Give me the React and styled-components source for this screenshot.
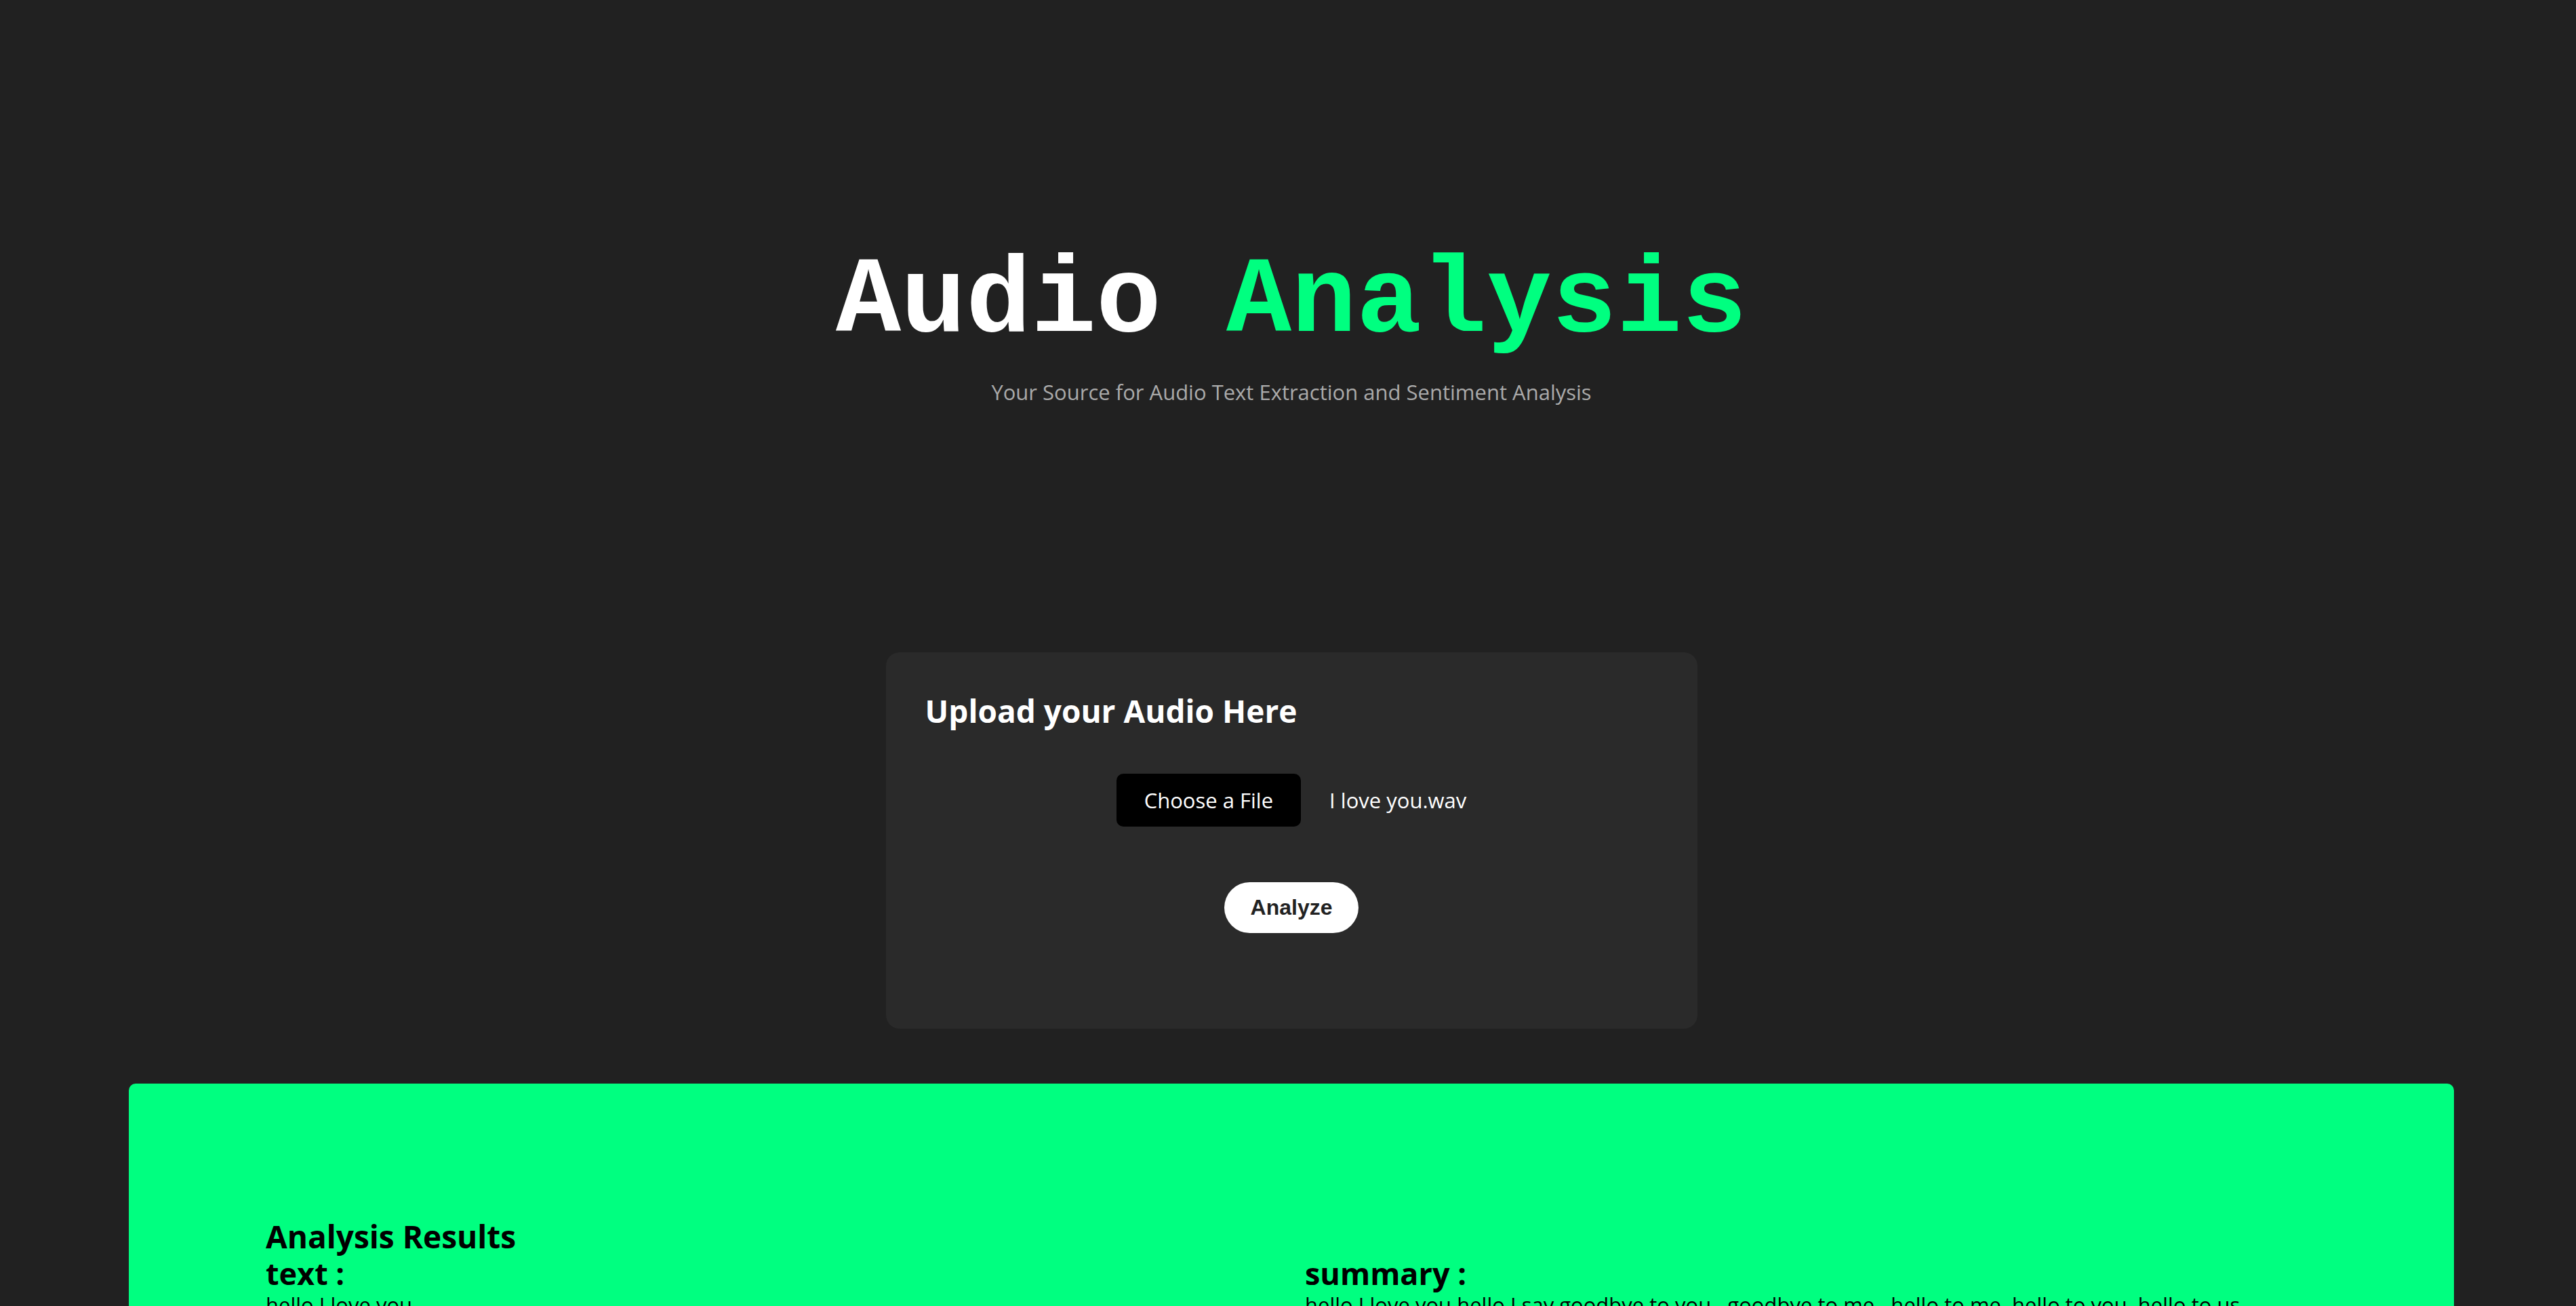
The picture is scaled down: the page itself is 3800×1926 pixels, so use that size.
import styled, { createGlobalStyle } from "styled-components";

const GlobalStyle = createGlobalStyle`
  * {
    box-sizing: border-box;
  }

  body {
    margin: 0;
    background: #212121;
    color: #fff;
    font-family: "Open Sans", "Noto Sans", sans-serif;
  }
`;

const Page = styled.main`
  display: flex;
  flex-direction: column;
  align-items: center;
  padding-left: 10px;
  padding-top: 356px;
`;

const Hero = styled.header`
  text-align: center;
  margin-bottom: 363px;

  .title {
    margin: 0;
    font-family: "Liberation Mono", monospace;
    font-size: 160px;
    line-height: 180px;
    font-weight: 700;
    color: #fff;
  }

  .title span {
    color: #00ff80;
  }

  .subtitle {
    margin: 21px 0 0;
    font-size: 31px;
    font-weight: 400;
    line-height: 42px;
    color: #aaaaaa;
  }
`;

const UploadCard = styled.section`
  width: 1197px;
  padding: 58px 58px 141px;
  background: #2a2a2a;
  border-radius: 20px;

  .heading {
    margin: 0 0 65px;
    font-size: 46px;
    line-height: 56px;
    font-weight: 700;
  }
`;

const FileRow = styled.div`
  display: flex;
  align-items: center;
  justify-content: center;
  gap: 42px;
  margin-bottom: 82px;

  .fileName {
    font-size: 31px;
    color: #fff;
  }
`;

const ChooseButton = styled.label`
  display: inline-block;
  padding: 20px 41px;
  background: #000;
  color: #fff;
  border-radius: 10px;
  font-size: 31px;
  line-height: 38px;
  cursor: pointer;
`;

const Actions = styled.div`
  display: flex;
  justify-content: center;
`;

const AnalyzeButton = styled.button`
  padding: 19px 39px;
  border: none;
  border-radius: 40px;
  background: #fff;
  color: #222;
  font-family: "Liberation Sans", Arial, sans-serif;
  font-size: 32px;
  line-height: 37px;
  font-weight: 700;
  cursor: pointer;
`;

const Results = styled.section`
  width: 3430px;
  margin-top: 81px;
  padding: 197px 202px 160px;
  background: #00ff80;
  color: #000;
  border-radius: 10px;
  display: grid;
  grid-template-columns: 1fr 1fr;
  column-gap: 40px;

  .resultsHeading {
    grid-column: 1 / 2;
    margin: 0;
    font-size: 46px;
    line-height: 56px;
    font-weight: 700;
  }
`;

const ResultBlock = styled.div`
  h3 {
    margin: 0;
    font-size: 45px;
    line-height: 54px;
    font-weight: 700;
  }

  p {
    margin: 0;
    font-size: 31px;
    line-height: 38px;
  }
`;

const App = () => {
  return (
    <>
      <GlobalStyle />
      <Page>
        <Hero>
          <h1 className="title">
            Audio <span>Analysis</span>
          </h1>
          <p className="subtitle">
            Your Source for Audio Text Extraction and Sentiment Analysis
          </p>
        </Hero>

        <UploadCard>
          <h2 className="heading">Upload your Audio Here</h2>
          <FileRow>
            <ChooseButton>Choose a File</ChooseButton>
            <span className="fileName">I love you.wav</span>
          </FileRow>
          <Actions>
            <AnalyzeButton>Analyze</AnalyzeButton>
          </Actions>
        </UploadCard>

        <Results>
          <h2 className="resultsHeading">Analysis Results</h2>
          <div />
          <ResultBlock>
            <h3>text :</h3>
            <p>hello I love you</p>
          </ResultBlock>
          <ResultBlock>
            <h3>summary :</h3>
            <p>
              hello I love you hello I say goodbye to you , goodbye to me ,
              hello to me, hello to you, hello to us
            </p>
          </ResultBlock>
        </Results>
      </Page>
    </>
  );
};

export default App;
